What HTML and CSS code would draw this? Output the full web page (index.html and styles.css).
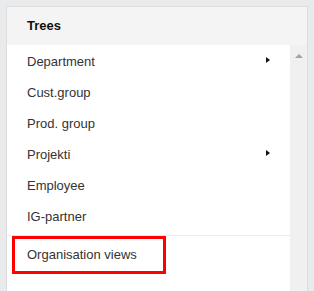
FILE: index.html
```html
<!DOCTYPE html>
<html lang="en">
<head>
  <title>Trees</title>
  <link rel="stylesheet" href="styles.css">
</head>
<body>
    <div class="panel">
        <div class="panel-header">Trees</div>
        <div class="panel-body">
            <div class="list">
                <div class="item">Department <span class="arrow"></span></div>
                <div class="item">Cust.group</div>
                <div class="item">Prod. group</div>
                <div class="item">Projekti <span class="arrow"></span></div>
                <div class="item">Employee</div>
                <div class="item">IG-partner</div>
                <div class="divider"></div>
                <div class="item marked"><span class="mark">Organisation views</span></div>
            </div>
            <div class="scrollbar">
                <span class="scroll-up"></span>
            </div>
        </div>
    </div>
</body>
</html>
```

FILE: styles.css
```css
body {
    margin: 0;
    padding: 6px 6px 0 6px;
    background: #e8eaeb;
    font-family: Tahoma, "Liberation Sans", Arial, sans-serif;
    font-size: 13px;
    color: #333;
}
.panel {
    background: #fff;
    border: solid 1px #dadcdd;
    border-bottom: none;
    height: 284px;
    display: flex;
    flex-direction: column;
    overflow: hidden;
}
.panel-header {
    background: #f4f4f4;
    height: 38px;
    line-height: 38px;
    padding-left: 20px;
    font-weight: bold;
    color: #111;
}
.panel-body {
    flex: 1;
    display: flex;
}
.list {
    flex: 1;
    padding-top: 1px;
}
.item {
    height: 31px;
    line-height: 31px;
    padding-left: 20px;
    padding-right: 20px;
    display: flex;
    justify-content: space-between;
    align-items: center;
}
.arrow {
    width: 0;
    height: 0;
    border-top: 3px solid transparent;
    border-bottom: 3px solid transparent;
    border-left: 4px solid #111;
    margin-top: -3px;
}
.divider {
    margin-top: 3px;
    border-top: solid 1px #ebebeb;
}
.item.marked {
    padding: 0 0 0 5px;
    height: 38px;
}
.mark {
    display: block;
    width: 136px;
    height: 32px;
    line-height: 31px;
    padding-left: 12px;
    border: solid 3px #f00;
}
.scrollbar {
    width: 17px;
    background: #f0f0f0;
    display: flex;
    justify-content: center;
    padding-top: 9px;
}
.scroll-up {
    width: 0;
    height: 0;
    border-left: 4px solid transparent;
    border-right: 4px solid transparent;
    border-bottom: 4px solid #a3a3a3;
}
```
